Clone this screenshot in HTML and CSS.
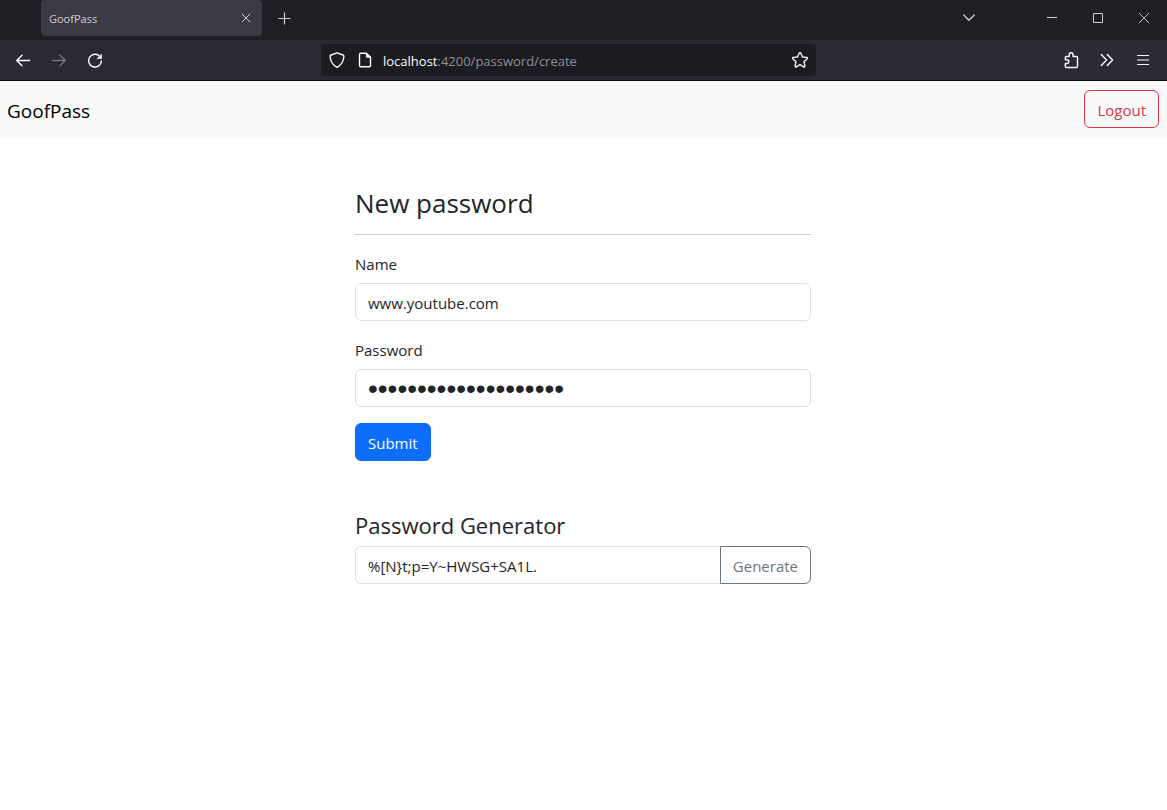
FILE: index.html
```html
<!DOCTYPE html>
<html lang="en">
<head>
<meta charset="utf-8">
<meta name="viewport" content="width=device-width, initial-scale=1">
<title>GoofPass</title>
<link rel="stylesheet" href="styles.css">
</head>
<body>
<div class="browser">
  <div class="tabbar">
    <div class="tab">
      <span class="tab-title">GoofPass</span>
      <button class="tab-close" type="button" aria-label="Close tab">
        <svg width="10" height="10" viewBox="0 0 10 10" fill="none" stroke="currentColor"><path d="M1 1l8 8M9 1L1 9"/></svg>
      </button>
    </div>
    <button class="tool" type="button" aria-label="New tab">
      <svg width="13" height="13" viewBox="0 0 13 13" fill="none" stroke="currentColor" stroke-width="1.2"><path d="M6.500 .5v12M.5 6.500h12"/></svg>
    </button>
    <button class="tool tab-list" type="button" aria-label="List all tabs">
      <svg width="12" height="8" viewBox="0 0 12 8" fill="none" stroke="currentColor" stroke-width="1.3" stroke-linecap="round"><path d="M.8 1L6 6.3 11.2 1"/></svg>
    </button>
    <div class="window-controls">
      <button class="window-button" type="button" aria-label="Minimize">
        <svg width="10" height="10" viewBox="0 0 10 10" fill="none" stroke="currentColor"><path d="M0 4.5h10"/></svg>
      </button>
      <button class="window-button" type="button" aria-label="Maximize">
        <svg width="10" height="10" viewBox="0 0 10 10" fill="none" stroke="currentColor"><path d="M.5 .5h9v9h-9z"/></svg>
      </button>
      <button class="window-button" type="button" aria-label="Close window">
        <svg width="10" height="10" viewBox="0 0 10 10" fill="none" stroke="currentColor" stroke-width=".9"><path d="M0 0l10 10M10 0L0 10"/></svg>
      </button>
    </div>
  </div>
  <div class="toolbar">
    <div class="history">
      <button class="tool" type="button" aria-label="Back">
        <svg width="16" height="16" viewBox="0 0 16 16" fill="none" stroke="currentColor" stroke-width="1.4" stroke-linecap="round" stroke-linejoin="round"><path d="M7 3.200L1.700 8.500 7 13.800M2 8.500h12.600"/></svg>
      </button>
      <button class="tool" type="button" aria-label="Forward" disabled>
        <svg width="16" height="16" viewBox="0 0 16 16" fill="none" stroke="currentColor" stroke-width="1.3" stroke-linecap="round" stroke-linejoin="round"><path d="M9 3.200L14.300 8.500 9 13.800M14 8.500H1.400"/></svg>
      </button>
      <button class="tool" type="button" aria-label="Reload">
        <svg width="16" height="18" viewBox="0 0 16 18" fill="none" stroke="currentColor" stroke-width="1.4" stroke-linecap="round"><path d="M12.800 5.400A6.400 6.400 0 1 0 14.400 10"/><path d="M14.600 3.400v4.200h-4.200z" fill="currentColor" stroke-width=".6" stroke-linejoin="round"/></svg>
      </button>
    </div>
    <div class="urlbar">
      <svg width="16" height="16" viewBox="0 0 16 16" fill="none" stroke="currentColor" stroke-width="1.4" stroke-linejoin="round"><path d="M8 .8L14 3c.7.2.9.7.9 1.300C14.600 9.400 12.500 13 8 15.300 3.500 13 1.400 9.400 1.100 4.300 1.100 3.700 1.300 3.200 2 3z"/></svg>
      <svg width="16" height="16" viewBox="0 0 16 16" fill="none" stroke="currentColor" stroke-width="1.4" stroke-linejoin="round"><path d="M9.400 1.200H3.700c-.8 0-1.200.4-1.200 1.200v11.200c0 .8.400 1.200 1.200 1.200h8.600c.8 0 1.200-.4 1.200-1.200V5.300z"/><path d="M9.400 1.200v4.100h4.100z" fill="currentColor" stroke-width=".8"/></svg>
      <div class="address"><span class="host">localhost</span>:4200/password/create</div>
      <button class="bookmark" type="button" aria-label="Bookmark this page">
        <svg width="18" height="18" viewBox="0 0 18 18" fill="none" stroke="currentColor" stroke-width="1.4" stroke-linejoin="round"><path d="M9 1.700c.4 0 .7.200.8.500l1.700 3.800 4.200.4c.8.100 1 .9.500 1.400L13 10.700l.9 4.300c.1.700-.6 1.200-1.200.8L9 13.700l-3.700 2.100c-.6.400-1.300-.1-1.200-.8l.9-4.300-3.200-2.900c-.5-.5-.3-1.300.5-1.400L6.500 6l1.700-3.800c.1-.3.400-.5.800-.5z"/></svg>
      </button>
    </div>
    <div class="actions">
      <button class="tool" type="button" aria-label="Extensions">
        <svg width="16" height="18" viewBox="0 0 16 18" fill="none" stroke="currentColor" stroke-width="1.4" stroke-linejoin="round"><path d="M6.200 5.500V3.600a1.900 1.900 0 0 1 3.800 0v1.900h3.300c.8 0 1.200.4 1.200 1.200v8.600c0 .8-.4 1.200-1.200 1.200H3.500c-.8 0-1.200-.4-1.200-1.200v-2.800H4a1.900 1.900 0 0 0 0-3.800H2.300V6.700c0-.8.400-1.200 1.200-1.200z"/></svg>
      </button>
      <button class="tool" type="button" aria-label="More tools">
        <svg width="14" height="14" viewBox="0 0 14 14" fill="none" stroke="currentColor" stroke-width="1.400" stroke-linecap="round" stroke-linejoin="round"><path d="M1.300 1.500L6.600 7l-5.300 5.500M7.300 1.500L12.600 7l-5.300 5.500"/></svg>
      </button>
      <button class="tool" type="button" aria-label="Open menu">
        <svg width="12" height="12" viewBox="0 0 12 12" fill="none" stroke="currentColor" stroke-width="1.200"><path d="M0 1.500h12M0 6h12M0 10.500h12"/></svg>
      </button>
    </div>
  </div>
</div>

<nav class="navbar">
  <a class="brand" href="#">GoofPass</a>
  <button class="btn btn-danger" type="button">Logout</button>
</nav>

<main class="page">
  <div class="column">
    <form>
      <h1 class="title">New password</h1>
      <hr class="rule">
      <div class="field">
        <label for="name">Name</label>
        <input class="control" id="name" type="text" value="www.youtube.com">
      </div>
      <div class="field">
        <label for="password">Password</label>
        <input class="control secret" id="password" type="password" value="%[N}t;p=Y~HWSG+SA1L.">
      </div>
      <button class="btn btn-primary" type="submit">Submit</button>
    </form>
    <section class="generator">
      <h2 class="subtitle" id="generator-title">Password Generator</h2>
      <div class="input-group">
        <input class="control" type="text" aria-labelledby="generator-title" value="%[N}t;p=Y~HWSG+SA1L.">
        <button class="btn btn-secondary" type="button">Generate</button>
      </div>
    </section>
  </div>
</main>
</body>
</html>
```
FILE: styles.css
```css
*, *::before, *::after { box-sizing: border-box; }

body {
  margin: 0;
  background: #fff;
  color: #212529;
  font-family: "Segoe UI", "Open Sans", "Noto Sans", sans-serif;
  font-size: 15px;
  line-height: 24px;
}

button, input { font: inherit; }
button { cursor: pointer; }
svg { display: block; flex: none; }

/* Browser window */
.browser {
  color: #fbfbfe;
  border-bottom: 1px solid #0c0c0d;
}

.tabbar {
  display: flex;
  align-items: center;
  height: 40px;
  padding: 0 0 4px 41px;
  background: #1f1e25;
  color: #d0d0d4;
}

.tab {
  display: flex;
  align-items: center;
  justify-content: space-between;
  width: 221px;
  height: 36px;
  padding: 0 4px 0 8px;
  border-radius: 4px;
  background: #3a3944;
  font-size: 11px;
}

.tab-title { padding-top: 1px; }

.tool, .tab-close, .window-button, .bookmark {
  display: flex;
  align-items: center;
  justify-content: center;
  padding: 0;
  border: 0;
  background: none;
  color: inherit;
}

.tab-close { width: 24px; height: 24px; }
.tool { width: 36px; height: 36px; margin: 0 4px; }
.tool:disabled { color: #76757e; }
.tab-list { margin-left: auto; margin-right: 42px; }
.window-controls { display: flex; }
.window-button { width: 46px; height: 36px; }

.toolbar {
  display: grid;
  grid-template-columns: 321px 1fr 351px;
  align-items: center;
  height: 40px;
  background: #2b2a33;
}

.history, .actions { display: flex; }
.history { padding-left: 5px; }
.actions { justify-content: flex-end; padding-right: 6px; }
.history .tool, .actions .tool { margin: 0; }

.urlbar {
  display: flex;
  align-items: center;
  gap: 12px;
  height: 32px;
  padding: 0 7px 0 8px;
  border-radius: 4px;
  background: #1c1b22;
}

.address {
  flex: 1;
  margin-left: -2px;
  padding-top: 2px;
  color: #8f8e96;
  font-size: 13px;
}

.host { color: #fbfbfe; }

/* Application */
.navbar {
  display: flex;
  align-items: center;
  justify-content: space-between;
  padding: 9px 8px 9px 7px;
  background: #f8f9fa;
}

.brand {
  padding-top: 3px;
  color: #000;
  font-size: 19px;
  text-decoration: none;
}

.btn {
  height: 38px;
  padding: 2px 12px 0;
  border: 1px solid;
  border-radius: 6px;
  background: none;
}

.btn-danger { border-color: #dc3545; color: #dc3545; }
.btn-primary { border-color: #0d6efd; background: #0d6efd; color: #fff; }
.btn-secondary { border-color: #6c757d; color: #6c757d; }

.page {
  display: grid;
  grid-template-columns: 7fr 10fr 7fr;
  padding: 48px 8px 48px 7px;
}

.column {
  grid-column: 2;
  min-width: 0;
  padding: 0 12px;
}

.title, .subtitle { margin: 0; font-weight: 400; }
.title { font-size: 26px; line-height: 37px; }
.subtitle { margin-bottom: 4px; font-size: 22px; line-height: 33px; }

.rule {
  margin: 12px 0 16px;
  border: 0;
  border-top: 1px solid #c8c9ca;
}

.field { margin-bottom: 16px; }

.field label {
  display: block;
  margin-bottom: 6px;
  line-height: 26px;
}

.control {
  display: block;
  width: 100%;
  height: 38px;
  padding: 2px 12px 0;
  border: 1px solid #dee2e6;
  border-radius: 6px;
  background: #fff;
  color: #212529;
}

/* Larger face for the masking dots */
.secret {
  font-family: "Liberation Sans", Arial, sans-serif;
  font-size: 28px;
}

.generator { margin-top: 48px; }
.input-group { display: flex; }

.input-group .control {
  flex: 1;
  min-width: 0;
  border-right: 0;
  border-radius: 6px 0 0 6px;
}

.input-group .btn { border-radius: 0 6px 6px 0; }
```
